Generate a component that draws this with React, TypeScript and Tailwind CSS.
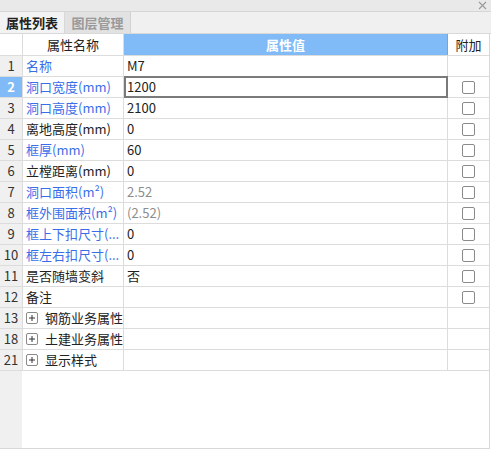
import React from 'react';

type Row = {
  no: number;
  name: string;
  value?: string;
  blue?: boolean;
  gray?: boolean;
  check?: boolean;
  group?: boolean;
};

const rows: Row[] = [
  { no: 1, name: '名称', value: 'M7', blue: true },
  { no: 2, name: '洞口宽度(mm)', value: '1200', blue: true, check: true },
  { no: 3, name: '洞口高度(mm)', value: '2100', blue: true, check: true },
  { no: 4, name: '离地高度(mm)', value: '0', check: true },
  { no: 5, name: '框厚(mm)', value: '60', blue: true, check: true },
  { no: 6, name: '立樘距离(mm)', value: '0', check: true },
  { no: 7, name: '洞口面积(m²)', value: '2.52', blue: true, gray: true, check: true },
  { no: 8, name: '框外围面积(m²)', value: '(2.52)', blue: true, gray: true, check: true },
  { no: 9, name: '框上下扣尺寸(...', value: '0', blue: true, check: true },
  { no: 10, name: '框左右扣尺寸(...', value: '0', blue: true, check: true },
  { no: 11, name: '是否随墙变斜', value: '否', check: true },
  { no: 12, name: '备注', value: '', check: true },
  { no: 13, name: '钢筋业务属性', group: true },
  { no: 18, name: '土建业务属性', group: true },
  { no: 21, name: '显示样式', group: true },
];

const PlusBox = () => (
  <span className="w-[12px] h-[12px] border border-[#8a8a8a] rounded-[2px] flex items-center justify-center mr-[7px] shrink-0">
    <svg width="8" height="8" viewBox="0 0 8 8">
      <path d="M4 1v6M1 4h6" stroke="#333" strokeWidth="1" />
    </svg>
  </span>
);

export default function App() {
  const selected = 2;
  return (
    <div
      className="w-[491px] h-[449px] bg-white flex flex-col text-[13px] text-[#222] overflow-hidden"
      style={{ fontFamily: '"Noto Sans CJK SC", "Noto Sans", sans-serif' }}
    >
      {/* title strip */}
      <div className="h-[12px] bg-[#e9e9e9] border-b border-[#d6d6d6] flex justify-end items-center pr-[4px] shrink-0">
        <svg width="9" height="9" viewBox="0 0 9 9">
          <path d="M1 1l7 7M8 1l-7 7" stroke="#9a9a9a" strokeWidth="1.1" />
        </svg>
      </div>

      {/* tabs */}
      <div className="h-[22px] bg-[#f0f0f0] border-b border-[#d8d8d8] flex shrink-0">
        <div className="w-[65px] h-full flex items-center justify-center font-bold text-[#222] border-r border-[#d8d8d8] bg-[#f3f3f3]">
          属性列表
        </div>
        <div className="w-[66px] h-full flex items-center justify-center font-bold text-[#9a9a9a] border-r border-[#d2d2d2] bg-[#e2e2e2]">
          图层管理
        </div>
      </div>

      {/* table */}
      <div className="flex-1 flex flex-col w-[490px] border-r border-b border-[#d8d8d8]">
        {/* header */}
        <div className="flex h-[22px] border-b border-[#dcdcdc] shrink-0">
          <div className="w-[23px] border-r border-[#dcdcdc] bg-white" />
          <div className="w-[101px] border-r border-[#dcdcdc] flex items-center justify-center text-[#222]">
            属性名称
          </div>
          <div className="w-[324px] border-r border-[#6aa8ea] bg-[#80bbf7] flex items-center justify-center text-white font-bold">
            属性值
          </div>
          <div className="flex-1 flex items-center justify-center text-[#222]">附加</div>
        </div>

        {rows.map((r) => {
          const isSel = r.no === selected;
          return (
            <div key={r.no} className="flex h-[21px] border-b border-[#dcdcdc] shrink-0">
              <div
                className={
                  isSel
                    ? 'w-[23px] border-r border-[#dcdcdc] bg-[#80bbf7] text-white font-bold flex items-center justify-center'
                    : 'w-[23px] border-r border-[#dcdcdc] bg-[#f0f0f0] text-[#333] flex items-center justify-center'
                }
              >
                {r.no}
              </div>
              <div
                className={
                  'w-[101px] border-r border-[#dcdcdc] flex items-center pl-[3px] whitespace-nowrap overflow-hidden ' +
                  (r.blue ? 'text-[#3a6ee8]' : 'text-[#222]')
                }
              >
                {r.group && <PlusBox />}
                {r.name}
              </div>
              <div
                className={
                  isSel
                    ? 'w-[324px] -mt-[1px] h-[22px] border-2 border-[#7a7a7a] flex items-center pl-[1px]'
                    : 'w-[324px] border-r border-[#dcdcdc] flex items-center pl-[3px] ' +
                      (r.gray ? 'text-[#8c8c8c]' : 'text-[#222]')
                }
              >
                {r.value}
              </div>
              <div className="flex-1 flex items-center justify-center">
                {r.check && (
                  <span className="w-[13px] h-[13px] border border-[#8a8a8a] rounded-[2px] bg-white" />
                )}
              </div>
            </div>
          );
        })}

        {/* filler */}
        <div className="flex-1 flex">
          <div className="w-[22px] bg-[#f0f0f0]" />
          <div className="flex-1 bg-white" />
        </div>
      </div>
    </div>
  );
}
